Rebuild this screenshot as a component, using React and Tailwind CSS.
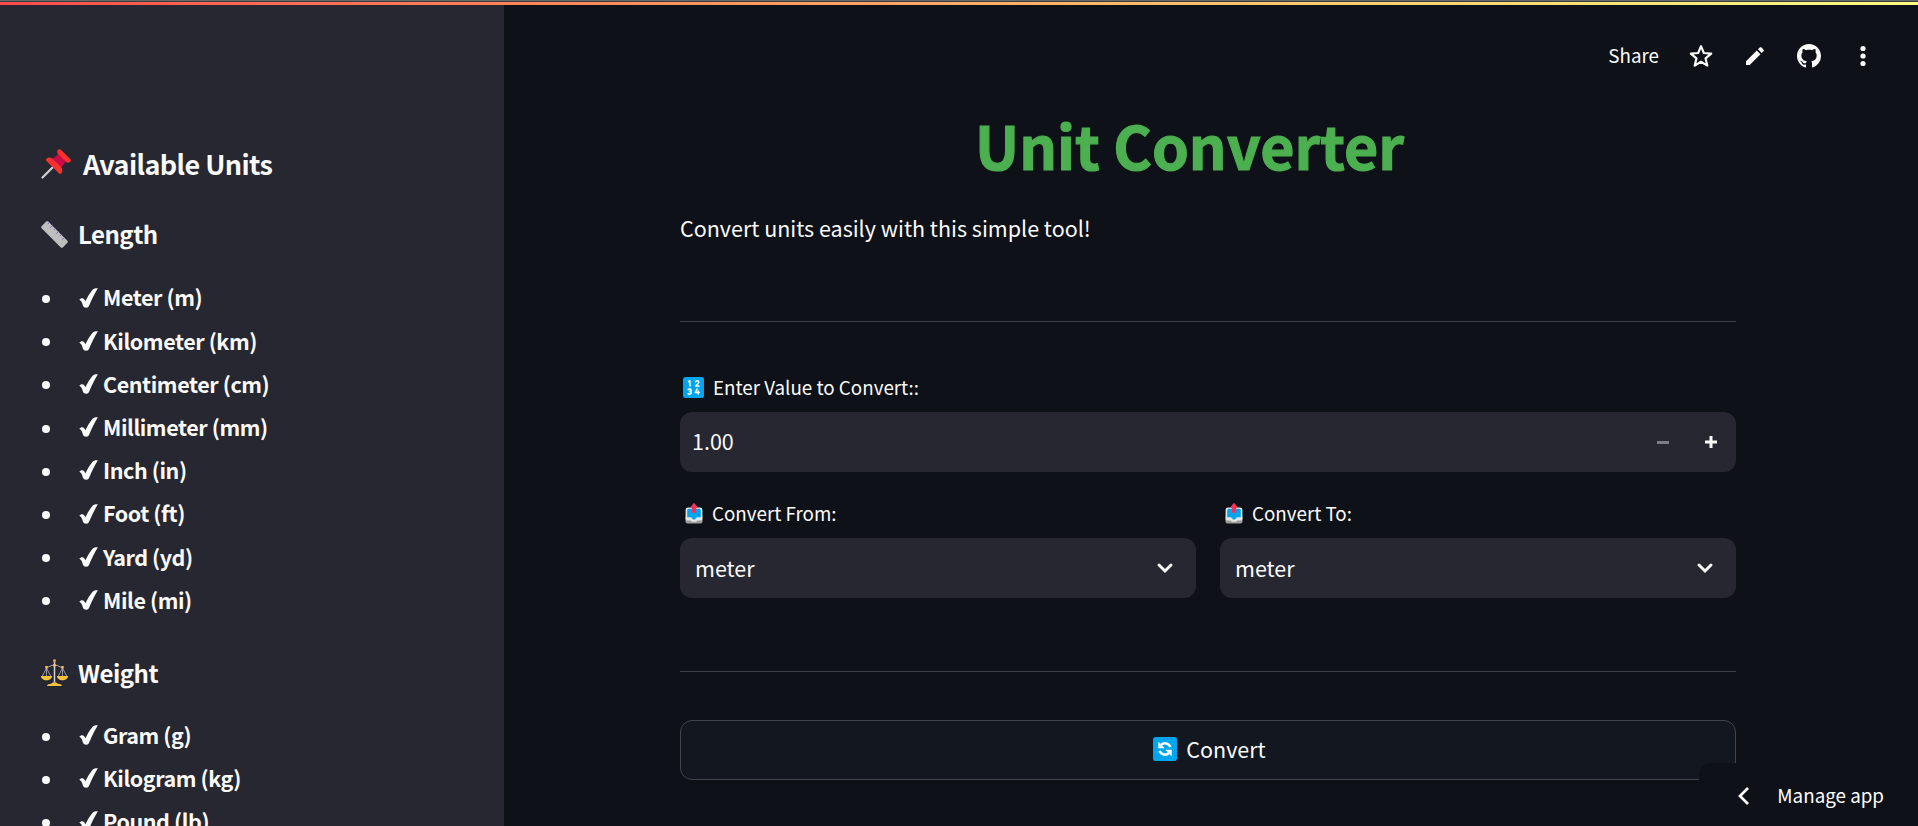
import React from "react";

const LENGTH = ["Meter (m)", "Kilometer (km)", "Centimeter (cm)", "Millimeter (mm)", "Inch (in)", "Foot (ft)", "Yard (yd)", "Mile (mi)"];
const WEIGHT = ["Gram (g)", "Kilogram (kg)", "Pound (lb)"];

function Pushpin() {
  return (
    <svg viewBox="0 0 30 30" className="h-[30px] w-[30px] shrink-0">
      <path d="M1.5 28.5 12 18" stroke="#d3d3d3" strokeWidth="2.2" strokeLinecap="round" />
      <path d="M10 11 19 4l7 7-7 9z" fill="#ca0b4a" />
      <path d="M16.6 1.3c.9-1.4 2.300-1.500 3.300-.5l9.300 9.300c1 1 .9 2.400-.5 3.200-1.200.6-2.300.5-3.500-.2l-8.400-8.400c-.7-1.200-.8-2.200-.2-3.400z" fill="#f8312f" />
      <path d="M5.700 9.600c1.600-1.500 4-1.200 6.200.3l8.200 8.200c1.500 2.200 1.800 4.600.3 6.200-.8.800-1.800.8-2.600 0L5.700 12.200c-.8-.8-.8-1.800 0-2.600z" fill="#f8312f" />
    </svg>
  );
}

function Ruler() {
  return (
    <svg viewBox="0 0 27 27" className="h-[27px] w-[27px] shrink-0">
      <path d="M.6 5.200 5.200.6c.6-.6 1.400-.6 2 0l19.200 19.200c.6.6.6 1.400 0 2l-4.600 4.600c-.6.600-1.400.600-2 0L.6 7.200c-.6-.6-.6-1.400 0-2z" fill="#bebebe" />
      <path d="m8.200 1.600-1.500 1.500M11.200 4.600 9 6.800M14.200 7.600l-1.500 1.500M17.200 10.600 15 12.800M20.200 13.600l-1.500 1.500M23.200 16.600 21 18.800" stroke="#8d65c5" strokeWidth="1" />
    </svg>
  );
}

function Scales() {
  return (
    <svg viewBox="0 0 27 27" className="h-[27px] w-[27px] shrink-0" fill="none">
      <path d="M5.500 8.500c3 0 3.500-2.400 8-2.400s5 2.400 8 2.400" stroke="#b4acbc" strokeWidth="1" />
      <path d="M13.500 3v20" stroke="#d3d3d3" strokeWidth="1.500" />
      <path d="M5.500 9 1.400 17M5.500 9l4.100 8M5.500 9v8M21.500 9l-4.100 8M21.500 9l4.100 8M21.500 9v8" stroke="#b4acbc" strokeWidth=".8" />
      <circle cx="13.500" cy="1.700" r="1.400" fill="#f3ad61" />
      <path d="M4.300 7h2.400v2.600H4.300zM20.300 7h2.400v2.600h-2.400zM12.200 5h2.600v2.600h-2.600z" fill="#f9c23c" />
      <path d="M0 17h11c0 2.700-2.400 4.200-5.500 4.200S0 19.700 0 17zM16 17h11c0 2.700-2.400 4.200-5.500 4.200S16 19.700 16 17zM6 27c.3-1.700 2-2 4-2.300 1-.9 2-1.500 3.500-1.500s2.500.6 3.500 1.500c2 .3 3.700.6 4 2.300z" fill="#f9c23c" />
    </svg>
  );
}

function Numbers() {
  return (
    <svg viewBox="0 0 21 21" className="h-[21px] w-[21px] shrink-0" fill="none">
      <rect width="21" height="21" rx="2.500" fill="#00a6ed" />
      <g stroke="#fff" strokeWidth="1.500" strokeLinecap="round" strokeLinejoin="round">
        <path d="M5.500 4.600 6.900 3.700V9" />
        <path d="M12.600 4.700c.4-1.500 3.200-1.400 3.200.3 0 1.300-1.700 2.300-3 3.900h3.200" />
        <path d="M5.300 12.400c.9-.8 2.900-.5 2.900.8 0 .9-.8 1.200-1.700 1.200 1 0 1.900.4 1.900 1.400 0 1.500-2.300 1.800-3.300.8" />
        <path d="m14 12-1.700 3.600h3.900M15.300 14v3" />
      </g>
    </svg>
  );
}

function Outbox() {
  return (
    <svg viewBox="0 0 18 21" className="h-[21px] w-[18px] shrink-0">
      <path d="M.5 14h17v4.500a2 2 0 0 1-2 2h-13a2 2 0 0 1-2-2z" fill="#9b9b9b" />
      <path d="M3 4.500h12a2.400 2.400 0 0 1 2.400 2.400v8.800c0 1.200-.8 1.800-2 1.800h-3l-1.300 1.200H6.900L5.600 17.500h-3c-1.200 0-2-.6-2-1.800V6.900A2.400 2.400 0 0 1 3 4.500z" fill="#e6e6e6" />
      <path d="M3.700 5.800h10.600a1.500 1.500 0 0 1 1.500 1.500v7h-3.200c-.8 0-1.500.6-1.900 1.300-.3.700-.9 1.200-1.700 1.200s-1.400-.5-1.700-1.200c-.4-.7-1.100-1.300-1.900-1.300H2.200v-7a1.500 1.500 0 0 1 1.500-1.500z" fill="#00a6ed" />
      <path d="M8.300.5c.4-.4 1-.4 1.400 0l2.300 2.900c.5.700.2 1.300-.5 1.300h-.4v4.200c0 .6-.3.900-.9.900H7.800c-.6 0-.9-.3-.9-.9V4.700h-.4c-.7 0-1-.6-.5-1.300z" fill="#f92f60" />
    </svg>
  );
}

function Refresh() {
  return (
    <svg viewBox="0 0 24 24" className="h-6 w-6 shrink-0" fill="none">
      <rect width="24" height="24" rx="2.800" fill="#00a6ed" />
      <path d="M8.200 7.800c3-2.600 7.700-1.600 9.300 2.200M15.800 16.200c-3 2.600-7.700 1.600-9.300-2.200" stroke="#fff" strokeWidth="2.500" />
      <path d="M5.300 4.800v6.400h6.400zM18.700 19.200v-6.400h-6.400z" fill="#fff" />
    </svg>
  );
}

function Check() {
  return (
    <svg viewBox="0 0 19 20" className="h-5 w-[19px] shrink-0" fill="#fafafa">
      <path d="M.3 11.800c.9-1.600 3.200-2.100 4.500-1.100.8.700 1.200 1.700 1.600 2.500C8.400 9.200 10.900 4.600 13.800 1.400 15.100.2 17.300 0 18.900.2 15.700 5.300 12.800 11.400 10.100 17.700c-.5 1.300-1.300 2-2.800 2-1.900 0-2.800-.5-3.400-2.200C3.200 15.300 2.500 12.500.3 11.800z" />
    </svg>
  );
}

function Chevron() {
  return (
    <svg viewBox="0 0 16 12" className="h-3 w-4" fill="none">
      <path d="m2 3 6 6 6-6" stroke="#fafafa" strokeWidth="2.900" strokeLinecap="round" />
    </svg>
  );
}

function UnitList({ items }) {
  return (
    <ul>
      {items.map((name) => (
        <li key={name} className="flex h-[43.2px] items-center">
          <span className="mt-[3px] ml-px h-2 w-2 rounded-full bg-[#fafafa]" />
          <span className="ml-[29px] flex"><Check /></span>
          <span className="ml-[5px] text-[21.5px] font-bold tracking-[-0.42px]">{name}</span>
        </li>
      ))}
    </ul>
  );
}

function Select({ label }) {
  return (
    <div className="flex-1">
      <div className="flex h-[35px] items-start gap-[9px] pl-[5px]">
        <Outbox />
        <span className="text-[18.8px] leading-[20px]">{label}</span>
      </div>
      <div className="flex h-[60px] items-center justify-between rounded-xl bg-[#262730] pr-[23px] pl-[15px]">
        <span className="text-[21.5px]">meter</span>
        <Chevron />
      </div>
    </div>
  );
}

export default function App() {
  return (
    <div className="relative flex h-[826px] overflow-hidden bg-[#0e1117] font-['Noto_Sans_CJK_SC','Noto_Sans',sans-serif] text-[#fafafa]">
      <aside className="h-full w-[504px] shrink-0 bg-[#262730] px-[41px] pt-[144px]">
        <h2 className="flex h-10 items-center gap-3 text-[27px] font-bold tracking-[-0.6px]">
          <Pushpin />
          Available Units
        </h2>
        <h3 className="mt-[30px] mb-[22px] flex h-10 items-center gap-[10px] text-[24px] font-bold tracking-[-0.5px]">
          <Ruler />
          Length
        </h3>
        <UnitList items={LENGTH} />
        <h3 className="mt-[31px] mb-[21px] flex h-10 items-center gap-[10px] text-[24px] font-bold tracking-[-0.5px]">
          <Scales />
          Weight
        </h3>
        <UnitList items={WEIGHT} />
      </aside>

      <div className="flex min-w-0 flex-1 flex-col">
        <header className="flex h-[112px] shrink-0 items-center justify-end pr-[43px]">
          <span className="-mt-px text-[18.8px]">Share</span>
          <svg viewBox="0 0 20 20" className="ml-[30px] h-6 w-6" fill="none">
            <path d="m10 1.800 2.350 5.700 6.150.5-4.700 4 1.450 6L10 14.800 4.750 18l1.450-6-4.700-4 6.150-.5z" stroke="#fafafa" strokeWidth="1.800" strokeLinejoin="round" />
          </svg>
          <svg viewBox="0 0 18 18" className="ml-[33px] h-[18px] w-[18px]" fill="#fafafa">
            <path d="M0 14.300 10.800 3.500l3.700 3.700L3.700 18H0zM12 2.300 13.700.600c.6-.6 1.300-.6 1.900 0l1.800 1.800c.6.6.6 1.300 0 1.900L15.700 6z" />
          </svg>
          <svg viewBox="0 0 16 16" className="ml-[33px] h-6 w-6" fill="#fafafa">
            <path d="M8 0C3.580 0 0 3.580 0 8c0 3.540 2.290 6.530 5.470 7.590.4.070.55-.17.55-.38 0-.19-.01-.82-.01-1.490-2.010.37-2.530-.49-2.690-.94-.09-.23-.48-.94-.82-1.130-.28-.15-.68-.52-.01-.53.63-.01 1.080.58 1.230.82.72 1.210 1.870.87 2.330.66.070-.52.28-.87.51-1.070-1.780-.2-3.640-.89-3.640-3.950 0-.87.31-1.590.82-2.150-.08-.2-.36-1.020.08-2.120 0 0 .67-.21 2.200.82.64-.18 1.320-.27 2-.27s1.360.09 2 .27c1.530-1.040 2.200-.82 2.200-.82.44 1.100.16 1.920.08 2.120.51.56.82 1.270.82 2.150 0 3.070-1.870 3.750-3.650 3.950.29.25.54.73.54 1.480 0 1.070-.01 1.930-.01 2.200 0 .21.15.46.55.38A8.010 8.010 0 0 0 16 8c0-4.420-3.580-8-8-8z" />
          </svg>
          <svg viewBox="0 0 24 24" className="ml-[30px] h-6 w-6" fill="#fafafa">
            <circle cx="12" cy="4.500" r="2.600" />
            <circle cx="12" cy="12" r="2.600" />
            <circle cx="12" cy="19.500" r="2.600" />
          </svg>
        </header>

        <main className="ml-[176px] w-[1056px]">
          <h1 className="h-[76px] pr-[37px] text-center text-[59px] leading-[66px] font-bold text-[#4caf50] [-webkit-text-stroke:1.2px_#4caf50]">Unit Converter</h1>
          <p className="mt-[22px] text-[21.5px] leading-[36px]">Convert units easily with this simple tool!</p>
          <hr className="mt-[75px] border-[#3d4047]" />
          <div className="mt-[55px] flex h-[35px] items-start gap-[9px] pl-[3px]">
            <Numbers />
            <span className="text-[18.8px] leading-[20px]">Enter Value to Convert::</span>
          </div>
          <div className="flex h-[60px] items-center rounded-xl bg-[#262730] pr-[19px] pl-3">
            <span className="mb-0.5 flex-1 text-[21.5px]">1.00</span>
            <span className="h-[3px] w-3 bg-[#7d7e85]" />
            <svg viewBox="0 0 12 12" className="ml-9 h-3 w-3" fill="#fafafa">
              <path d="M4.500 0h3v4.500H12v3H7.500V12h-3V7.500H0v-3h4.500z" />
            </svg>
          </div>
          <div className="mt-[31px] flex gap-6">
            <Select label="Convert From:" />
            <Select label="Convert To:" />
          </div>
          <hr className="mt-[73px] border-[#3d4047]" />
          <button className="mt-12 flex h-[60px] w-full items-center justify-center gap-[9px] rounded-xl border border-[#41444c] bg-[#131720] pb-0.5 pl-[3px] text-[21.5px]">
            <Refresh />
            Convert
          </button>
        </main>
      </div>

      <div className="absolute top-0 left-0 h-[5px] w-full border-t border-[#66696a] bg-[#3b3d3f] pt-px">
        <div className="h-[3px] bg-linear-to-r from-[#ff4b4b] to-[#fffd80]" />
      </div>
      <div className="absolute right-0 bottom-0 flex h-[63px] w-[219px] items-center rounded-tl-xl bg-[#0e1117] pt-0.5 pr-[34px] pl-[39px]">
        <svg viewBox="0 0 11 18" className="h-[18px] w-[11px]" fill="none">
          <path d="M10 1 2 9l8 8" stroke="#fff" strokeWidth="2.700" />
        </svg>
        <span className="ml-auto text-[18.8px] text-white">Manage app</span>
      </div>
    </div>
  );
}
